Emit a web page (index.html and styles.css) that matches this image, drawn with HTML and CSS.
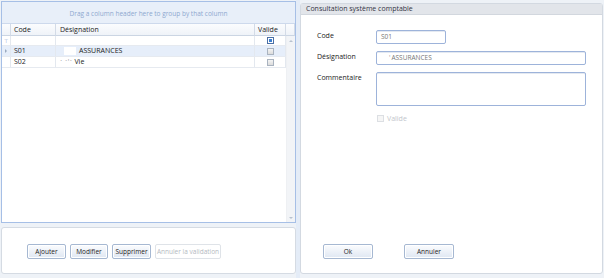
FILE: index.html
```html
<!DOCTYPE html>
<html lang="fr">
<head>
    <meta charset="UTF-8">
    <title>Consultation système comptable</title>
    <link rel="stylesheet" href="styles.css">
</head>
<body>
    <div class="layout">
        <div class="left">
            <div class="grid">
                <div class="group-panel">Drag a column header here to group by that column</div>
                <div class="row head">
                    <div class="cell ind"></div>
                    <div class="cell code">Code</div>
                    <div class="cell des">Désignation</div>
                    <div class="cell val">Valide</div>
                    <div class="cell fill"></div>
                </div>
                <div class="body">
                    <div class="rows">
                        <div class="row filter">
                            <div class="cell ind"><span class="funnel">⊤</span></div>
                            <div class="cell code"></div>
                            <div class="cell des"></div>
                            <div class="cell val"><span class="chk on"></span></div>
                        </div>
                        <div class="row data selected">
                            <div class="cell ind"><span class="arrow"></span></div>
                            <div class="cell code">S01</div>
                            <div class="cell des"><span class="blur"></span>ASSURANCES</div>
                            <div class="cell val"><span class="chk"></span></div>
                        </div>
                        <div class="row data">
                            <div class="cell ind"></div>
                            <div class="cell code">S02</div>
                            <div class="cell des"><span class="ghost">ˑ ˑ'ˑ</span> Vie</div>
                            <div class="cell val"><span class="chk"></span></div>
                        </div>
                    </div>
                    <div class="scroll">
                        <span class="sarrow up"></span>
                        <span class="sarrow down"></span>
                    </div>
                </div>
            </div>
            <div class="actions">
                <button class="btn add">Ajouter</button>
                <button class="btn edit">Modifier</button>
                <button class="btn del">Supprimer</button>
                <button class="btn disabled">Annuler la validation</button>
            </div>
        </div>
        <div class="splitter"></div>
        <div class="right">
            <div class="title">Consultation système comptable</div>
            <div class="form">
                <div class="field">
                    <label>Code</label>
                    <div class="input short">S01</div>
                </div>
                <div class="field">
                    <label>Désignation</label>
                    <div class="input"><span class="tick">'</span>ASSURANCES</div>
                </div>
                <div class="field">
                    <label>Commentaire</label>
                    <div class="input area"></div>
                </div>
                <div class="check-line">
                    <span class="chk dim"></span> Valide
                </div>
            </div>
            <div class="form-actions">
                <button class="btn wide">Ok</button>
                <button class="btn wide">Annuler</button>
            </div>
        </div>
    </div>
</body>
</html>
```

FILE: styles.css
```css
* {
    box-sizing: border-box;
}

body {
    margin: 0;
    width: 604px;
    height: 278px;
    font-family: "Open Sans", "Noto Sans", sans-serif;
    font-size: 7px;
    color: #222;
    background-color: #eef2f7;
    background-image: radial-gradient(#dfe5ee 0.6px, transparent 0.7px);
    background-size: 2px 2px;
}

.layout {
    display: flex;
    height: 278px;
}

.left {
    width: 296px;
    padding: 1px 0 4px 1px;
    display: flex;
    flex-direction: column;
}

.grid {
    height: 222px;
    border: 1px solid #a6bfe6;
    background: #fff;
    display: flex;
    flex-direction: column;
}

.group-panel {
    height: 22px;
    background-color: #e8eff9;
    background-image: radial-gradient(#dbe5f3 0.6px, transparent 0.7px);
    background-size: 2px 2px;
    color: #8ea8cf;
    font-size: 6.5px;
    text-align: center;
    line-height: 24px;
    border-bottom: 1px solid #cdd9ec;
}

.row {
    display: flex;
    height: 11px;
    line-height: 10px;
}

.cell {
    border-right: 1px solid #e3e8ef;
    border-bottom: 1px solid #e6eaf0;
    padding-left: 3px;
    white-space: nowrap;
    overflow: hidden;
}

.head {
    height: 12px;
    line-height: 11px;
    background: linear-gradient(#fbfcfe, #eef2f8);
}

.head .cell {
    border-right: 1px solid #d3dbe7;
    border-bottom: 1px solid #cbd5e3;
}

.ind {
    width: 9px;
    padding: 0;
    text-align: center;
}

.code { width: 45px; }
.des { width: 199px; padding-left: 4px; }
.val { width: 31px; padding-left: 3px; }
.fill { flex: 1; border-right: none; }

.body {
    flex: 1;
    display: flex;
}

.rows {
    width: 284px;
}

.rows .cell.val {
    display: flex;
    align-items: center;
    justify-content: center;
    padding: 0;
}

.filter {
    height: 10px;
}

.funnel {
    color: #7f9ccc;
    font-size: 5px;
    line-height: 10px;
}

.selected {
    background: #e6eefa;
}

.arrow {
    display: inline-block;
    border-left: 2px solid #9aa9bf;
    border-top: 2px solid transparent;
    border-bottom: 2px solid transparent;
    vertical-align: middle;
}

.blur {
    display: inline-block;
    width: 12px;
    height: 8px;
    background: #fff;
    vertical-align: middle;
    margin-right: 3px;
    margin-left: 4px;
}

.ghost {
    color: #9a9a9a;
    letter-spacing: 0.5px;
}

.chk {
    display: inline-block;
    width: 7px;
    height: 7px;
    border: 1px solid #a9b3c0;
    background: linear-gradient(#f4f4f4, #dcdcdc);
}

.chk.on {
    border-color: #4a6fa6;
    background: #fff;
    box-shadow: inset 0 0 0 1px #fff, inset 0 0 0 3px #3c7fd0;
}

.scroll {
    width: 10px;
    background-color: #f2f4f7;
    background-image: radial-gradient(#e0e4ea 0.6px, transparent 0.7px);
    background-size: 2px 2px;
    border-left: 1px solid #eef0f3;
    display: flex;
    flex-direction: column;
    justify-content: space-between;
    align-items: center;
    padding: 4px 0 3px;
}

.sarrow {
    width: 0;
    height: 0;
    border-left: 2px solid transparent;
    border-right: 2px solid transparent;
}

.sarrow.up { border-bottom: 2px solid #b8c2cf; }
.sarrow.down { border-top: 2px solid #b8c2cf; }

.actions {
    margin-top: 4px;
    height: 47px;
    background: #fff;
    border: 1px solid #d5dbe3;
    border-radius: 3px;
    display: flex;
    align-items: center;
    gap: 4px;
    padding: 2px 0 0 25px;
}

.btn {
    font-family: inherit;
    font-size: 6.5px;
    color: #222;
    height: 15px;
    padding: 0;
    border: 1px solid #a6b8d2;
    border-radius: 2px;
    background: linear-gradient(#fbfcfe, #dfe7f2);
    box-shadow: inset 0 0 0 1px #fff;
}

.btn.add { width: 39px; }
.btn.edit { width: 38px; }
.btn.del { width: 39px; }

.btn.disabled {
    width: 66px;
    color: #b4b9c0;
    border-color: #dfe3e8;
    background: #fff;
}

.splitter {
    width: 4px;
    background-color: #e4ecf7;
    background-image: radial-gradient(#c8d7ee 0.6px, transparent 0.7px);
    background-size: 2px 2px;
}

.right {
    width: 303px;
    margin: 3px 0 4px 0;
    background: #fff;
    border: 1px solid #d3d9e1;
    border-radius: 3px;
    display: flex;
    flex-direction: column;
}

.title {
    height: 11px;
    line-height: 10px;
    padding-left: 5px;
    color: #334;
    background-color: #e2e5ea;
    background-image: radial-gradient(#d6dae0 0.6px, transparent 0.7px);
    background-size: 2px 2px;
    border-bottom: 1px solid #d2d7de;
}

.form {
    flex: 1;
    padding: 15px 0 0 16px;
}

.field {
    display: flex;
    margin-bottom: 7px;
}

.field label {
    width: 59px;
    line-height: 10px;
    padding-top: 1px;
}

.input {
    width: 210px;
    height: 14px;
    border: 1px solid #9db3da;
    border-radius: 2px;
    color: #777;
    font-size: 6.5px;
    line-height: 12px;
    padding-left: 4px;
    box-shadow: inset 0 1px 0 #e4e9f1;
}

.input.short {
    width: 70px;
}

.input.area {
    height: 34px;
}

.tick {
    margin-left: 8px;
    margin-right: 1px;
    color: #999;
}

.check-line {
    margin: 8px 0 0 60px;
    color: #c2c6cc;
    display: flex;
    align-items: center;
    gap: 3px;
}

.chk.dim {
    border-color: #dcdfe3;
    background: #f6f6f6;
}

.form-actions {
    display: flex;
    gap: 31px;
    padding: 0 0 14px 22px;
}

.btn.wide {
    width: 50px;
}
```
